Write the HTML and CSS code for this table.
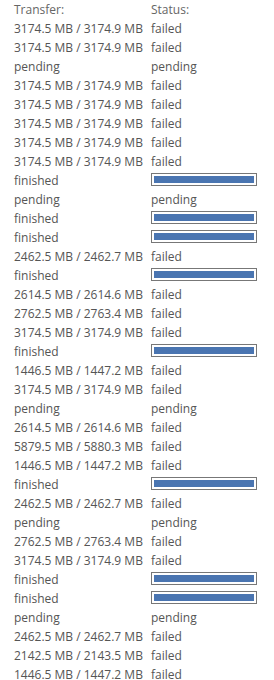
FILE: index.html
```html
<!DOCTYPE html>
<html lang="en">
<head>
    <meta charset="UTF-8">
    <title>Transfers</title>
    <link rel="stylesheet" href="styles.css">
</head>
<body>
    <div class="transfers">
        <div class="head">Transfer:</div><div class="head">Status:</div>
        <div>3174.5 MB / 3174.9 MB</div><div>failed</div>
        <div>3174.5 MB / 3174.9 MB</div><div>failed</div>
        <div>pending</div><div>pending</div>
        <div>3174.5 MB / 3174.9 MB</div><div>failed</div>
        <div>3174.5 MB / 3174.9 MB</div><div>failed</div>
        <div>3174.5 MB / 3174.9 MB</div><div>failed</div>
        <div>3174.5 MB / 3174.9 MB</div><div>failed</div>
        <div>3174.5 MB / 3174.9 MB</div><div>failed</div>
        <div>finished</div><div><div class="progress"><div class="fill"></div></div></div>
        <div>pending</div><div>pending</div>
        <div>finished</div><div><div class="progress"><div class="fill"></div></div></div>
        <div>finished</div><div><div class="progress"><div class="fill"></div></div></div>
        <div>2462.5 MB / 2462.7 MB</div><div>failed</div>
        <div>finished</div><div><div class="progress"><div class="fill"></div></div></div>
        <div>2614.5 MB / 2614.6 MB</div><div>failed</div>
        <div>2762.5 MB / 2763.4 MB</div><div>failed</div>
        <div>3174.5 MB / 3174.9 MB</div><div>failed</div>
        <div>finished</div><div><div class="progress"><div class="fill"></div></div></div>
        <div>1446.5 MB / 1447.2 MB</div><div>failed</div>
        <div>3174.5 MB / 3174.9 MB</div><div>failed</div>
        <div>pending</div><div>pending</div>
        <div>2614.5 MB / 2614.6 MB</div><div>failed</div>
        <div>5879.5 MB / 5880.3 MB</div><div>failed</div>
        <div>1446.5 MB / 1447.2 MB</div><div>failed</div>
        <div>finished</div><div><div class="progress"><div class="fill"></div></div></div>
        <div>2462.5 MB / 2462.7 MB</div><div>failed</div>
        <div>pending</div><div>pending</div>
        <div>2762.5 MB / 2763.4 MB</div><div>failed</div>
        <div>3174.5 MB / 3174.9 MB</div><div>failed</div>
        <div>finished</div><div><div class="progress"><div class="fill"></div></div></div>
        <div>finished</div><div><div class="progress"><div class="fill"></div></div></div>
        <div>pending</div><div>pending</div>
        <div>2462.5 MB / 2462.7 MB</div><div>failed</div>
        <div>2142.5 MB / 2143.5 MB</div><div>failed</div>
        <div>1446.5 MB / 1447.2 MB</div><div>failed</div>
    </div>
</body>
</html>
```

FILE: styles.css
```css
* {
    margin: 0;
    padding: 0;
    box-sizing: border-box;
}

body {
    background-color: white;
    font-family: "Open Sans", sans-serif;
    font-size: 12px;
    color: #555;
}

.transfers {
    display: grid;
    grid-template-columns: 137px 106px;
    grid-auto-rows: 19px;
    padding-left: 14px;
    line-height: 19px;
    white-space: nowrap;
}

.head {
    color: #666;
}

.progress {
    margin-top: 2px;
    width: 106px;
    height: 13px;
    border: 1px solid #777;
    padding: 2px;
    background: white;
}

.fill {
    height: 100%;
    background-color: #4a75b1;
}
```
